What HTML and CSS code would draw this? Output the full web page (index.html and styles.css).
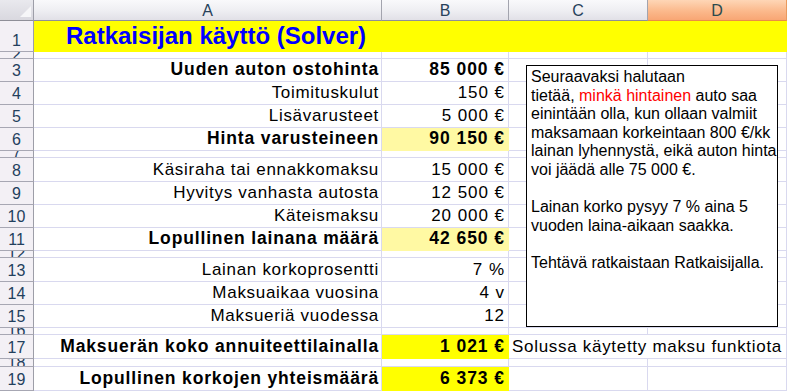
FILE: index.html
```html
<!DOCTYPE html>
<html lang="fi">
<head>
<meta charset="utf-8">
<title>Ratkaisijan käyttö (Solver)</title>
<link rel="stylesheet" href="styles.css">
</head>
<body>
<div class="sheet">
  <!-- header row -->
  <div class="corner"></div>
  <div class="ch">A</div>
  <div class="ch">B</div>
  <div class="ch">C</div>
  <div class="ch sel">D</div>

  <!-- row 1 -->
  <div class="rh">1</div>
  <div class="c y title">Ratkaisijan käyttö (Solver)</div>

  <!-- row 2 -->
  <div class="rh thin">2</div>
  <div class="c"></div><div class="c"></div><div class="c"></div><div class="c"></div>

  <!-- row 3 -->
  <div class="rh">3</div>
  <div class="c r b">Uuden auton ostohinta</div>
  <div class="c r b v">85 000 €</div>
  <div class="c"></div><div class="c"></div>

  <!-- row 4 -->
  <div class="rh">4</div>
  <div class="c r">Toimituskulut</div>
  <div class="c r v">150 €</div>
  <div class="c"></div><div class="c"></div>

  <!-- row 5 -->
  <div class="rh">5</div>
  <div class="c r">Lisävarusteet</div>
  <div class="c r v">5 000 €</div>
  <div class="c"></div><div class="c"></div>

  <!-- row 6 -->
  <div class="rh">6</div>
  <div class="c r b">Hinta varusteineen</div>
  <div class="c r b v py">90 150 €</div>
  <div class="c"></div><div class="c"></div>

  <!-- row 7 -->
  <div class="rh thin">7</div>
  <div class="c"></div><div class="c"></div><div class="c"></div><div class="c"></div>

  <!-- row 8 -->
  <div class="rh">8</div>
  <div class="c r">Käsiraha tai ennakkomaksu</div>
  <div class="c r v">15 000 €</div>
  <div class="c"></div><div class="c"></div>

  <!-- row 9 -->
  <div class="rh">9</div>
  <div class="c r">Hyvitys vanhasta autosta</div>
  <div class="c r v">12 500 €</div>
  <div class="c"></div><div class="c"></div>

  <!-- row 10 -->
  <div class="rh">10</div>
  <div class="c r">Käteismaksu</div>
  <div class="c r v">20 000 €</div>
  <div class="c"></div><div class="c"></div>

  <!-- row 11 -->
  <div class="rh">11</div>
  <div class="c r b">Lopullinen lainana määrä</div>
  <div class="c r b v py">42 650 €</div>
  <div class="c"></div><div class="c"></div>

  <!-- row 12 -->
  <div class="rh thin">12</div>
  <div class="c"></div><div class="c"></div><div class="c"></div><div class="c"></div>

  <!-- row 13 -->
  <div class="rh">13</div>
  <div class="c r">Lainan korkoprosentti</div>
  <div class="c r v">7 %</div>
  <div class="c"></div><div class="c"></div>

  <!-- row 14 -->
  <div class="rh">14</div>
  <div class="c r">Maksuaikaa vuosina</div>
  <div class="c r v">4 v</div>
  <div class="c"></div><div class="c"></div>

  <!-- row 15 -->
  <div class="rh">15</div>
  <div class="c r">Maksueriä vuodessa</div>
  <div class="c r v">12</div>
  <div class="c"></div><div class="c"></div>

  <!-- row 16 -->
  <div class="rh thin">16</div>
  <div class="c"></div><div class="c"></div><div class="c"></div><div class="c"></div>

  <!-- row 17 -->
  <div class="rh">17</div>
  <div class="c r b">Maksuerän koko annuiteettilainalla</div>
  <div class="c r b v y">1 021 €</div>
  <div class="c span2">Solussa käytetty maksu funktiota</div>

  <!-- row 18 -->
  <div class="rh thin">18</div>
  <div class="c"></div><div class="c"></div><div class="c"></div><div class="c"></div>

  <!-- row 19 -->
  <div class="rh">19</div>
  <div class="c r b">Lopullinen korkojen yhteismäärä</div>
  <div class="c r b v y">6 373 €</div>
  <div class="c"></div><div class="c"></div>

  <!-- floating text box -->
  <div class="textbox">
    Seuraavaksi halutaan<br>
    tietää, <span class="red">minkä hintainen</span> auto saa<br>
    einintään olla, kun ollaan valmiit<br>
    maksamaan korkeintaan 800 €/kk<br>
    lainan lyhennystä, eikä auton hinta<br>
    voi jäädä alle 75 000 €.<br>
    <br>
    Lainan korko pysyy 7 % aina 5<br>
    vuoden laina-aikaan saakka.<br>
    <br>
    Tehtävä ratkaistaan Ratkaisijalla.
  </div>
</div>
</body>
</html>
```

FILE: styles.css
```css
* { box-sizing: border-box; }

html, body {
  margin: 0;
  padding: 0;
  background: #ffffff;
}

body {
  width: 787px;
  height: 391px;
  overflow: hidden;
  font-family: "Liberation Sans", Arial, sans-serif;
}

.sheet {
  position: relative;
  display: grid;
  grid-template-columns: 34px 348px 127px 139px 139px;
  grid-template-rows: 21px 31px 7px 23px 23px 23px 23px 7px 24px 23px 23px 23px 7px 24px 23px 23px 7px 24px 8px 24px;
  width: 787px;
}

/* header row */
.corner {
  position: relative;
  background: linear-gradient(#e9e9ee, #d9d8df);
  border-right: 1px solid #9d9ea8;
  border-bottom: 1px solid #8f8f98;
}
.corner::after {
  content: "";
  position: absolute;
  right: 2px;
  bottom: 3px;
  width: 0;
  height: 0;
  border-left: 11px solid transparent;
  border-bottom: 11px solid #f6f6f8;
}

.ch {
  display: flex;
  align-items: flex-end;
  justify-content: center;
  background: linear-gradient(#f9f9fb 0%, #eeeef2 55%, #e1e0e7 100%);
  border-right: 1px solid #a3a4ae;
  border-bottom: 1px solid #8f8f98;
  color: #27415a;
  font-size: 16px;
  line-height: normal;
  padding-bottom: 0;
}
.ch.sel {
  background: linear-gradient(#fed6b6 0%, #fbb98c 55%, #f8a674 100%);
  border-right: 1px solid #e99a5e;
  border-bottom: 1px solid #ea8c45;
  color: #2b4a4d;
}

/* row headers */
.rh {
  display: flex;
  align-items: flex-end;
  justify-content: center;
  overflow: hidden;
  background: #f3f0f5;
  border-right: 1px solid #9d9ea8;
  border-bottom: 1px solid #a7a7b3;
  color: #23405d;
  font-size: 16px;
  line-height: normal;
  padding-bottom: 1px;
}
.rh.thin {
  align-items: center;
  padding-bottom: 0;
}

/* cells */
.c {
  display: flex;
  align-items: flex-end;
  overflow: hidden;
  white-space: nowrap;
  border-right: 1px solid #d9d9ef;
  border-bottom: 1px solid #d9d9ef;
  font-size: 17px;
  letter-spacing: 0.7px;
  line-height: normal;
  padding: 0 2px 1px 3px;
  color: #000000;
}
.c.r { justify-content: flex-end; }
.c.b {
  font-weight: bold;
  font-size: 17.5px;
  letter-spacing: 0.85px;
}
.c.v {
  letter-spacing: 0.95px;
  padding-right: 3px;
}

.c.y {
  background: #ffff00;
  border-color: #ffff00;
}
.c.py {
  background: #fff9a3;
  border-color: #fff9a3;
}

.title {
  grid-column: span 4;
  color: #0000ff;
  font-size: 24px;
  font-weight: bold;
  letter-spacing: 0;
  padding-left: 32px;
  padding-bottom: 1px;
  border-right-color: #ffff00;
}

.span2 {
  grid-column: span 2;
}

/* floating text box */
.textbox {
  position: absolute;
  left: 526px;
  top: 65px;
  width: 252px;
  height: 262px;
  background: #ffffff;
  border: 1px solid #000000;
  padding: 2px 0 0 4px;
  overflow: hidden;
  white-space: nowrap;
  font-size: 16px;
  line-height: 18.6px;
  color: #000000;
}
.red { color: #ff0000; }
```
